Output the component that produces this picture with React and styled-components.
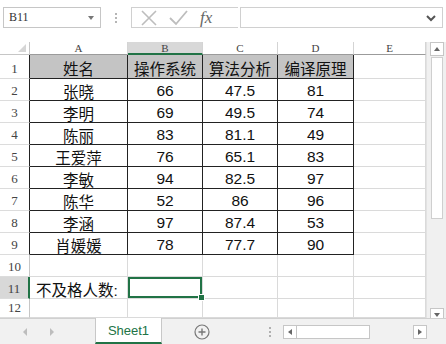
import React from "react";
import styled, { createGlobalStyle } from "styled-components";

const GREEN = "#217346";
const GRID = "#dadada";

const Global = createGlobalStyle`
  html, body { margin: 0; padding: 0; background: #fff; }
  body { width: 446px; height: 344px; overflow: hidden; }
`;

const Window = styled.div`
  width: 446px;
  height: 344px;
  display: flex;
  flex-direction: column;
  background: #fff;
  font-family: "Liberation Sans", "Noto Sans CJK SC", sans-serif;
  overflow: hidden;
`;

const FormulaBar = styled.div`
  height: 42px;
  box-sizing: border-box;
  padding: 7px 3px 0 3px;
  display: flex;
  align-items: flex-start;
`;

const NameBox = styled.div`
  width: 98px;
  height: 21px;
  box-sizing: border-box;
  border: 1px solid #c6c6c6;
  display: flex;
  align-items: center;
  justify-content: space-between;
  padding: 0 6px 0 5px;
  font-family: "Liberation Serif", serif;
  font-size: 12px;
  color: #333;
`;

const SmallCaret = styled.span`
  width: 0;
  height: 0;
  border-left: 3px solid transparent;
  border-right: 3px solid transparent;
  border-top: 4px solid #777;
`;

const Dots = styled.div`
  width: 30px;
  height: 21px;
  display: flex;
  flex-direction: column;
  align-items: center;
  justify-content: center;
  gap: 2px;
  span {
    width: 2px;
    height: 2px;
    background: #b5b5b5;
  }
`;

const IconBox = styled.div`
  width: 107px;
  height: 21px;
  box-sizing: border-box;
  border: 1px solid #d0d0d0;
  border-right: none;
  display: flex;
  align-items: center;
  padding-left: 8px;
  gap: 10px;
`;

const Fx = styled.span`
  font-family: "Liberation Serif", serif;
  font-style: italic;
  font-size: 17px;
  color: #666;
  margin-left: 2px;
  line-height: 1;
`;

const FormulaInput = styled.div`
  flex: 1;
  height: 21px;
  margin-left: 2px;
  box-sizing: border-box;
  border: 1px solid #d0d0d0;
  display: flex;
  align-items: center;
  justify-content: flex-end;
  padding-right: 6px;
`;

const Main = styled.div`
  height: 276px;
  display: flex;
`;

const Sheet = styled.div`
  display: grid;
  grid-template-columns: 30px 98px 75px 75px 76px 72px;
  grid-template-rows: 13px 24px repeat(10, 22px) 19px;
  width: 426px;
  overflow: hidden;
`;

const Corner = styled.div`
  box-sizing: border-box;
  border-right: 1px solid #c6c6c6;
  border-bottom: 1px solid #c6c6c6;
  position: relative;
  &::after {
    content: "";
    position: absolute;
    right: 3px;
    bottom: 2px;
    border-left: 8px solid transparent;
    border-bottom: 8px solid #d6d6d6;
  }
`;

const ColHead = styled.div`
  box-sizing: border-box;
  display: flex;
  align-items: center;
  justify-content: center;
  font-family: "Liberation Serif", serif;
  font-size: 11px;
  color: #444;
  background: ${(p) => (p.$active ? "#d8d8d8" : "#fff")};
  border-right: 1px solid #d4d4d4;
  border-bottom: ${(p) => (p.$active ? `2px solid ${GREEN}` : "1px solid #9b9b9b")};
`;

const RowHead = styled.div`
  box-sizing: border-box;
  display: flex;
  align-items: flex-end;
  justify-content: center;
  padding-bottom: 1px;
  font-family: "Liberation Serif", serif;
  font-size: 13px;
  color: #444;
  background: ${(p) => (p.$active ? "#d8d8d8" : "#fff")};
  border-bottom: 1px solid #dcdcdc;
  border-right: ${(p) =>
    p.$active ? `2px solid ${GREEN}` : p.$edge ? "1px solid #222" : "1px solid #c6c6c6"};
`;

const Cell = styled.div`
  box-sizing: border-box;
  position: relative;
  display: flex;
  align-items: center;
  justify-content: ${(p) => (p.$left ? "flex-start" : "center")};
  padding: ${(p) => (p.$left ? "2px 0 0 6px" : "2px 0 0 0")};
  font-size: 15.5px;
  color: #111;
  white-space: nowrap;
  background: ${(p) => (p.$head ? "#c4c4c4" : "#fff")};
  border-right: 1px solid ${(p) => (p.$edge ? "#222" : GRID)};
  border-bottom: 1px solid ${(p) => (p.$edge ? "#222" : GRID)};
  ${(p) =>
    p.$selected &&
    `
    box-shadow: inset 0 0 0 2px ${GREEN};
    &::after {
      content: "";
      position: absolute;
      right: -3px;
      bottom: -3px;
      width: 5px;
      height: 5px;
      background: ${GREEN};
      border: 1px solid #fff;
      z-index: 2;
    }
  `}
`;

const VScroll = styled.div`
  width: 20px;
  display: flex;
  flex-direction: column;
  align-items: center;
  padding-top: 0;
  box-sizing: border-box;
  background: #f0f0f0;
  border-left: 1px solid #e2e2e2;
`;

const ArrowBtn = styled.div`
  width: 14px;
  height: 14px;
  box-sizing: border-box;
  background: #fff;
  border: 1px solid #c6c6c6;
  display: flex;
  align-items: center;
  justify-content: center;
  flex-shrink: 0;
`;

const Tri = styled.span`
  width: 0;
  height: 0;
  ${(p) =>
    p.$dir === "up"
      ? "border-left: 3px solid transparent; border-right: 3px solid transparent; border-bottom: 4px solid #666;"
      : p.$dir === "down"
      ? "border-left: 3px solid transparent; border-right: 3px solid transparent; border-top: 4px solid #666;"
      : p.$dir === "left"
      ? "border-top: 3px solid transparent; border-bottom: 3px solid transparent; border-right: 4px solid #666;"
      : "border-top: 3px solid transparent; border-bottom: 3px solid transparent; border-left: 4px solid #666;"}
`;

const VThumb = styled.div`
  width: 12px;
  height: 162px;
  margin-top: 1px;
  box-sizing: border-box;
  background: #fff;
  border: 1px solid #cfcfcf;
`;

const VTrack = styled.div`
  flex: 1;
`;

const TabBar = styled.div`
  height: 26px;
  box-sizing: border-box;
  border-top: 1px solid #d0d0d0;
  background: #f1f1f1;
  display: flex;
  align-items: stretch;
`;

const NavArea = styled.div`
  width: 95px;
  display: flex;
  align-items: center;
  padding-left: 23px;
  gap: 23px;
  box-sizing: border-box;
`;

const NavTri = styled.span`
  width: 0;
  height: 0;
  border-top: 4px solid transparent;
  border-bottom: 4px solid transparent;
  ${(p) => (p.$left ? "border-right: 4px solid #bdbdbd;" : "border-left: 4px solid #bdbdbd;")}
`;

const SheetTab = styled.div`
  width: 67px;
  box-sizing: border-box;
  margin-top: -1px;
  background: #fff;
  border-left: 1px solid #c8c8c8;
  border-right: 1px solid #c8c8c8;
  border-bottom: 2px solid ${GREEN};
  display: flex;
  align-items: center;
  justify-content: center;
  color: ${GREEN};
  font-size: 13px;
`;

const AddBtn = styled.div`
  width: 95px;
  display: flex;
  align-items: center;
  padding-left: 32px;
  box-sizing: border-box;
`;

const TabDots = styled.div`
  width: 26px;
  display: flex;
  flex-direction: column;
  align-items: center;
  justify-content: center;
  gap: 2px;
  span {
    width: 2px;
    height: 2px;
    background: #b0b0b0;
  }
`;

const HScroll = styled.div`
  flex: 1;
  display: flex;
  align-items: center;
  padding-right: 19px;
`;

const HThumb = styled.div`
  width: 73px;
  height: 14px;
  box-sizing: border-box;
  background: #fff;
  border: 1px solid #c6c6c6;
  border-left: none;
`;

const HTrack = styled.div`
  flex: 1;
`;

const data = [
  ["姓名", "操作系统", "算法分析", "编译原理"],
  ["张晓", 66, 47.5, 81],
  ["李明", 69, 49.5, 74],
  ["陈丽", 83, 81.1, 49],
  ["王爱萍", 76, 65.1, 83],
  ["李敏", 94, 82.5, 97],
  ["陈华", 52, 86, 96],
  ["李涵", 97, 87.4, 53],
  ["肖媛媛", 78, 77.7, 90],
];

const cols = ["A", "B", "C", "D", "E"];

const App = () => {
  const cells = [];
  cells.push(<Corner key="corner" />);
  cols.forEach((c) =>
    cells.push(
      <ColHead key={"h" + c} $active={c === "B"}>
        {c}
      </ColHead>
    )
  );
  for (let r = 1; r <= 12; r++) {
    const row = data[r - 1];
    cells.push(
      <RowHead key={"r" + r} $active={r === 11} $edge={r <= 9}>
        {r}
      </RowHead>
    );
    for (let c = 0; c < 5; c++) {
      let text = "";
      let edge = false;
      if (row && c < 4) {
        text = row[c];
        edge = true;
      }
      if (r === 11 && c === 0) text = "不及格人数:";
      cells.push(
        <Cell
          key={r + "-" + c}
          $edge={edge}
          $head={r === 1 && c < 4}
          $left={r === 11 && c === 0}
          $selected={r === 11 && c === 1}
        >
          {text}
        </Cell>
      );
    }
  }

  return (
    <Window>
      <Global />
      <FormulaBar>
        <NameBox>
          B11
          <SmallCaret />
        </NameBox>
        <Dots>
          <span />
          <span />
          <span />
        </Dots>
        <IconBox>
          <svg width="18" height="16" viewBox="0 0 18 16">
            <path d="M2 1 L16 15 M16 1 L2 15" stroke="#bdbdbd" strokeWidth="1.6" fill="none" />
          </svg>
          <svg width="20" height="16" viewBox="0 0 20 16">
            <path d="M2 8 L8 14 L19 1" stroke="#bdbdbd" strokeWidth="1.8" fill="none" />
          </svg>
          <Fx>fx</Fx>
        </IconBox>
        <FormulaInput>
          <svg width="10" height="8" viewBox="0 0 10 8">
            <path d="M1 2 L5 6 L9 2" stroke="#555" strokeWidth="2" fill="none" />
          </svg>
        </FormulaInput>
      </FormulaBar>
      <Main>
        <Sheet>{cells}</Sheet>
        <VScroll>
          <ArrowBtn>
            <Tri $dir="up" />
          </ArrowBtn>
          <VThumb />
          <VTrack />
          <ArrowBtn style={{ marginBottom: "-4px" }}>
            <Tri $dir="down" />
          </ArrowBtn>
        </VScroll>
      </Main>
      <TabBar>
        <NavArea>
          <NavTri $left />
          <NavTri />
        </NavArea>
        <SheetTab>Sheet1</SheetTab>
        <AddBtn>
          <svg width="16" height="16" viewBox="0 0 16 16">
            <circle cx="8" cy="8" r="7" stroke="#777" strokeWidth="1.2" fill="none" />
            <path d="M8 4.5 V11.5 M4.5 8 H11.5" stroke="#777" strokeWidth="1.4" />
          </svg>
        </AddBtn>
        <TabDots>
          <span />
          <span />
          <span />
        </TabDots>
        <HScroll>
          <ArrowBtn>
            <Tri $dir="left" />
          </ArrowBtn>
          <HThumb />
          <HTrack />
          <ArrowBtn>
            <Tri $dir="right" />
          </ArrowBtn>
        </HScroll>
      </TabBar>
    </Window>
  );
};

export default App;
